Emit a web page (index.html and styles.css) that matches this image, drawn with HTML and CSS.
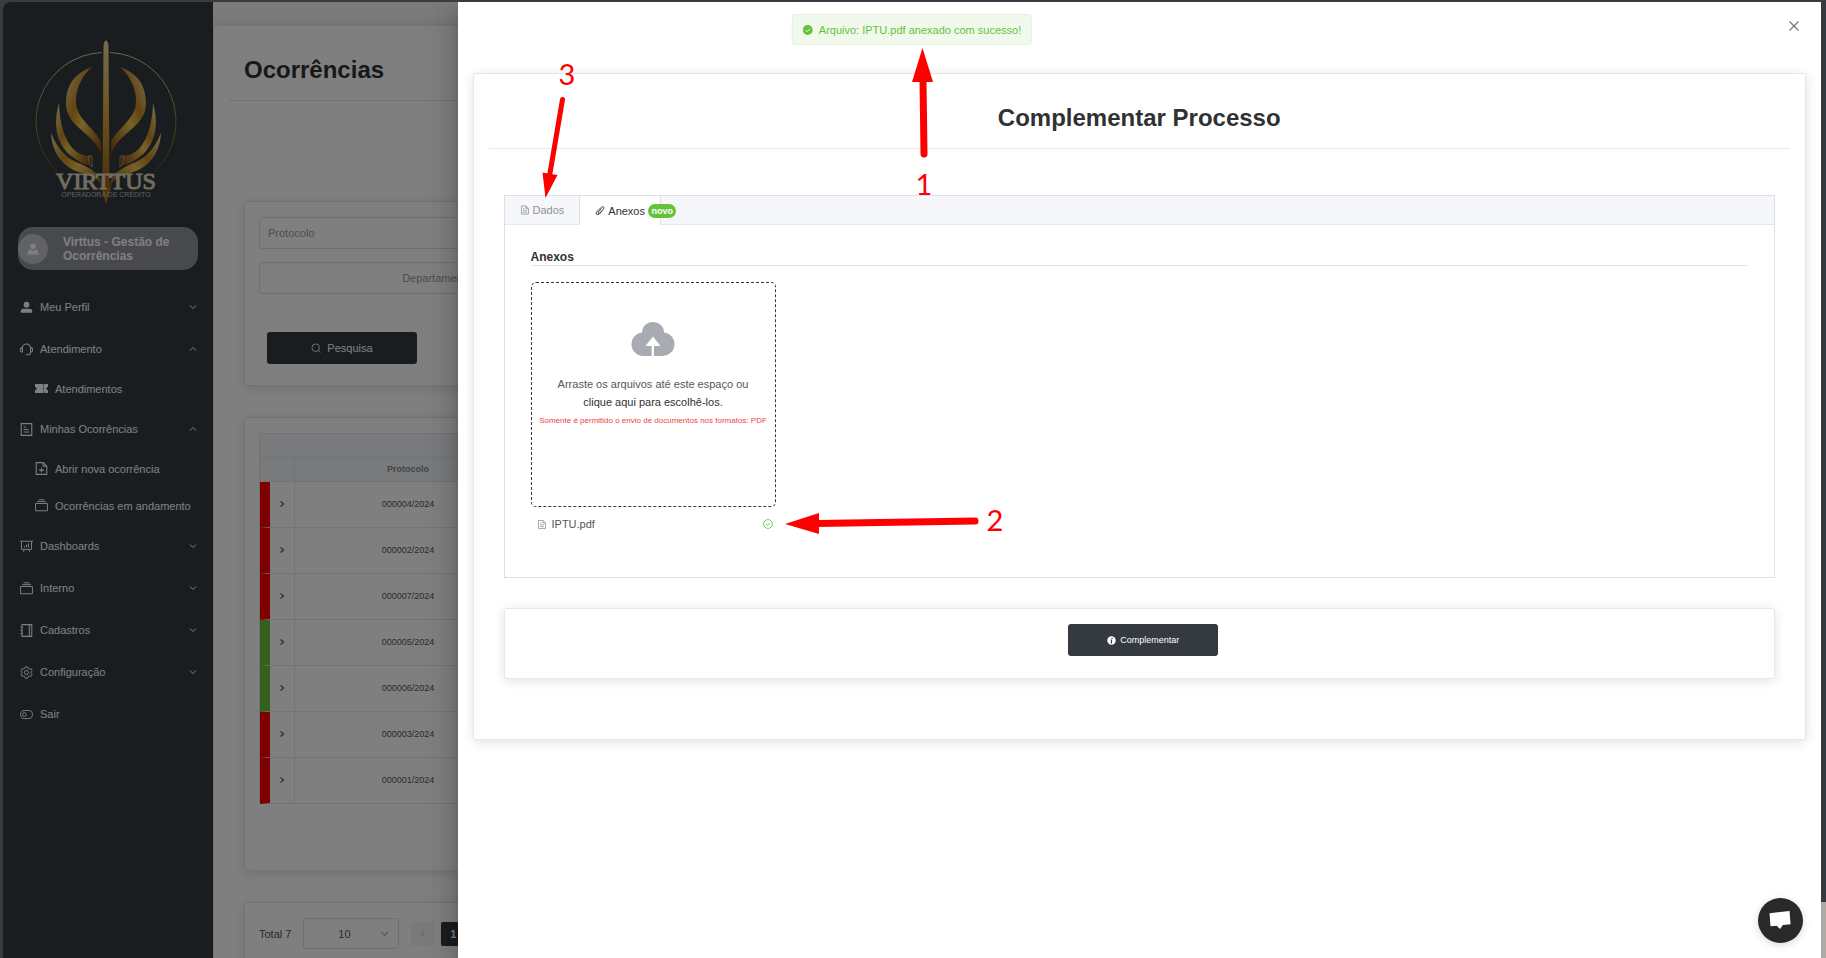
FILE: index.html
```html
<!DOCTYPE html>
<html lang="pt-BR">
<head>
<meta charset="utf-8">
<title>Ocorrências</title>
<link rel="stylesheet" href="styles.css">
</head>
<body>
<svg class="sprite" aria-hidden="true">
  <defs>
    <symbol id="down" viewBox="0 0 16 16"><path d="M3 5.500l5 5 5-5" fill="none" stroke="currentColor" stroke-width="1.600"/></symbol>
    <symbol id="up" viewBox="0 0 16 16"><path d="M3 10.500l5-5 5 5" fill="none" stroke="currentColor" stroke-width="1.600"/></symbol>
    <symbol id="right" viewBox="0 0 16 16"><path d="M5 3l6 5-6 5" fill="none" stroke="currentColor" stroke-width="2.400"/></symbol>
    <symbol id="left" viewBox="0 0 16 16"><path d="M10.500 3l-5 5 5 5" fill="none" stroke="currentColor" stroke-width="1.600"/></symbol>
    <symbol id="user" viewBox="0 0 16 16"><circle cx="8" cy="4.500" r="3.500" fill="currentColor"/><path d="M1 14.500v-2q0-3 3-3h8q3 0 3 3v2z" fill="currentColor"/></symbol>
    <symbol id="doc" viewBox="0 0 16 16"><path d="M2.500 1.500h7l4 4v9h-11zM9.500 1.500v4h4M5 5.500h2M5 8.500h6M5 11.500h6" fill="none" stroke="currentColor" stroke-width="1.300"/></symbol>
    <symbol id="box" viewBox="0 0 16 16"><path d="M.7 5.500h14.600v9H.7zM2.500 3.300h11M4.500 1h7" fill="none" stroke="currentColor" stroke-width="1.200"/></symbol>
  </defs>
</svg>

<div class="frame">
  <div class="window">
    <div class="shell">
      <aside class="sidebar">
        <svg class="logo" viewBox="0 0 150 170" role="img" aria-label="Virttus Operadora de Crédito">
          <defs>
            <linearGradient id="gold" x1="0" y1="0" x2="0" y2="1"><stop offset="0" stop-color="#e8d9a0"/><stop offset=".45" stop-color="#dba93a"/><stop offset="1" stop-color="#8a4f12"/></linearGradient>
            <linearGradient id="gold2" x1="0" y1="0" x2="1" y2="1"><stop offset="0" stop-color="#f0dfa0"/><stop offset=".35" stop-color="#c58a22"/><stop offset=".55" stop-color="#f0c650"/><stop offset="1" stop-color="#7d4410"/></linearGradient>
            <linearGradient id="ring" x1="0" y1="0" x2="0" y2="1"><stop offset="0" stop-color="#e0cf90"/><stop offset="1" stop-color="#7a4a14"/></linearGradient>
          </defs>
          <path d="M71 15.500A69 69 0 0 0 26 134M79 15.500A69 69 0 0 1 124 134" fill="none" stroke="url(#ring)"/>
          <g id="wing">
            <path d="M61 30C44 36 35 48 35 66c0 17 14 25 22 33 8 7 11 12 13 20v-14c-3-7-9-12-14-18-8-9-11-15-11-23 0-12 5-24 16-34z" fill="url(#gold2)"/>
            <path d="M28 66c-6 20-3 40 11 52 6 5 14 10 20 10l1-9c-19 1-31-20-32-53z" fill="url(#gold2)"/>
            <path d="M57 119h4v11q-3-2-3-6z" fill="none" stroke="#c9a45a" stroke-width=".8"/>
            <path d="M20 96c1 20 12 35 31 40 12 3 18 8 22 16-3-15-12-20-23-25-14-5-23-14-30-31z" fill="url(#gold2)"/>
          </g>
          <use href="#wing" transform="matrix(-1 0 0 1 150 0)"/>
          <path d="M72.500 8q0-3 2.500-5 2.500 2 2.500 5l1 140-3.500 18-3.500-18z" fill="url(#gold)"/>
          <path d="M69 147l6 20 6-20-6 8z" fill="#a9721c"/>
          <text x="75" y="152" text-anchor="middle" class="logo-name">VIRTTUS</text>
          <text x="75" y="160" text-anchor="middle" class="logo-sub">OPERADORA DE CRÉDITO</text>
        </svg>
        <div class="profile">
          <span class="avatar"><svg viewBox="0 0 12 12"><circle cx="6" cy="3.200" r="2.700" fill="#fff"/><path d="M.5 11.500q0-5 3.500-5l2 2 2-2q3.500 0 3.500 5z" fill="#fff"/></svg></span>
          <strong>Virttus - Gestão de Ocorrências</strong>
        </div>
        <nav class="menu">
          <a href="#"><svg class="ico"><use href="#user"/></svg>Meu Perfil<svg class="arrow"><use href="#down"/></svg></a>
          <a href="#"><svg class="ico" viewBox="0 0 16 16"><path d="M3 6a5 4.800 0 0 1 10 0M3 6v5H2q-1.500 0-1.500-2.500T2 6zM13 6v5h1q1.500 0 1.500-2.500T14 6zM13 11q0 3.500-4 3.500H7" fill="none" stroke="currentColor" stroke-width="1.300"/></svg>Atendimento<svg class="arrow"><use href="#up"/></svg></a>
          <div class="sub">
            <a href="#"><svg class="ico" viewBox="0 0 16 16"><path fill-rule="evenodd" d="M0 2.500h16V6a2 2 0 0 0 0 4v3.500H0V10a2 2 0 0 0 0-4zM10.200 2.500v2h1v-2zm0 4v3h1v-3zm0 5v2h1v-2z" fill="currentColor"/></svg>Atendimentos</a>
          </div>
          <a href="#"><svg class="ico" viewBox="0 0 16 16"><path d="M1.500.8h13v14.400h-13zM4.500 5h3M4.500 8h6M4.500 11h7" fill="none" stroke="currentColor" stroke-width="1.300"/></svg>Minhas Ocorrências<svg class="arrow"><use href="#up"/></svg></a>
          <div class="sub">
            <a href="#"><svg class="ico" viewBox="0 0 16 16"><path d="M1.500.8h8.500l4.500 4.500v9.900h-13zM10 .8v4.500h4.500M8 7v6M5 10h6" fill="none" stroke="currentColor" stroke-width="1.300"/></svg>Abrir nova ocorrência</a>
            <a href="#"><svg class="ico"><use href="#box"/></svg>Ocorrências em andamento</a>
          </div>
          <a href="#"><svg class="ico" viewBox="0 0 16 16"><path d="M0 1.500h16M1.800 1.500v10h12.400v-10M5.500 9V7.500M8 9V5.500M10.500 9V4M5.500 11.500l-1.500 3M10.500 11.500l1.500 3" fill="none" stroke="currentColor" stroke-width="1.200"/></svg>Dashboards<svg class="arrow"><use href="#down"/></svg></a>
          <a href="#"><svg class="ico"><use href="#box"/></svg>Interno<svg class="arrow"><use href="#down"/></svg></a>
          <a href="#"><svg class="ico" viewBox="0 0 16 16"><path d="M2.500.8h12v14.400h-12zM11.500.8v14.400M.5 4h3M.5 8h3M.5 12h3" fill="none" stroke="currentColor" stroke-width="1.300"/></svg>Cadastros<svg class="arrow"><use href="#down"/></svg></a>
          <a href="#"><svg class="ico" viewBox="0 0 16 16"><circle cx="8" cy="8" r="2.500" fill="none" stroke="currentColor" stroke-width="1.200"/><path d="M6.500 1h3l.5 2 1.500.8 2-.6 1.500 2.600L13.600 7.200v1.600l1.400 1.400-1.500 2.600-2-.6-1.500.8-.5 2h-3l-.5-2-1.500-.8-2 .6L1 10.200l1.400-1.400V7.200L1 5.800l1.500-2.600 2 .6L6 3z" fill="none" stroke="currentColor" stroke-width="1.200"/></svg>Configuração<svg class="arrow"><use href="#down"/></svg></a>
          <a href="#"><svg class="ico" viewBox="0 0 16 16"><rect x=".7" y="3" width="14.600" height="10" rx="5" fill="none" stroke="currentColor" stroke-width="1.200"/><circle cx="5.500" cy="8" r="2.300" fill="none" stroke="currentColor" stroke-width="1.200"/></svg>Sair</a>
        </nav>
      </aside>

      <main class="main">
        <div class="page">
          <h1>Ocorrências</h1>
          <section class="card filters">
            <div class="fields">
              <input class="field" type="text" placeholder="Protocolo" aria-label="Protocolo">
            </div>
            <div class="fields">
              <select class="field centered" aria-label="Departamento"><option>Departamento</option></select>
            </div>
            <button class="btn search" type="button"><svg viewBox="0 0 16 16"><circle cx="7.500" cy="7.500" r="6" fill="none" stroke="currentColor" stroke-width="1.300"/><path d="M12 12l3 3" stroke="currentColor" stroke-width="1.300"/></svg>Pesquisa</button>
          </section>
          <section class="card listing">
            <table>
              <colgroup><col class="c-mark"><col class="c-prot"><col></colgroup>
              <thead>
                <tr><th colspan="3"></th></tr>
                <tr><th></th><th>Protocolo</th><th></th></tr>
              </thead>
              <tbody>
                <tr><td class="red"><svg><use href="#right"/></svg></td><td>000004/2024</td><td></td></tr>
                <tr><td class="red"><svg><use href="#right"/></svg></td><td>000002/2024</td><td></td></tr>
                <tr><td class="red"><svg><use href="#right"/></svg></td><td>000007/2024</td><td></td></tr>
                <tr><td class="green"><svg><use href="#right"/></svg></td><td>000005/2024</td><td></td></tr>
                <tr><td class="green"><svg><use href="#right"/></svg></td><td>000006/2024</td><td></td></tr>
                <tr><td class="red"><svg><use href="#right"/></svg></td><td>000003/2024</td><td></td></tr>
                <tr><td class="red"><svg><use href="#right"/></svg></td><td>000001/2024</td><td></td></tr>
              </tbody>
            </table>
          </section>
          <section class="card pager">
            <span>Total 7</span>
            <span class="size"><select aria-label="Itens por página"><option>10</option></select><svg><use href="#down"/></svg></span>
            <button type="button" class="prev" aria-label="Anterior"><svg><use href="#left"/></svg></button>
            <button type="button" class="current">1</button>
          </section>
        </div>
      </main>
    </div>
    <div class="overlay"></div>

    <section class="drawer" role="dialog" aria-labelledby="drawer-title">
      <header class="drawer-head">
        <button type="button" class="close" aria-label="Fechar"><svg viewBox="0 0 10 10"><path d="M.5.5l9 9M9.500.5l-9 9" stroke="currentColor" stroke-width="1.200"/></svg></button>
      </header>
      <div class="card process">
        <h2 id="drawer-title">Complementar Processo</h2>
        <div class="tabs">
          <div class="tablist" role="tablist">
            <button type="button" role="tab"><svg><use href="#doc"/></svg>Dados</button>
            <button type="button" role="tab" class="active" aria-selected="true"><svg viewBox="0 0 16 16"><path d="M10.500 4L5.500 9.500q-1.200 1.500-.3 2.300t2.300-.4l6-6.400q1.500-2 .3-3.300t-3.300.1L3 8.800q-2 2.500-.5 4.300t4.200-.2L12 7.500" fill="none" stroke="currentColor" stroke-width="1.400"/></svg>Anexos<span class="badge">novo</span></button>
          </div>
          <div class="tabbody">
            <h3>Anexos</h3>
            <div class="upload">
              <button type="button" class="drop">
                <svg class="cloud" viewBox="0 0 44 34"><path d="M11 10.500a11 10.500 0 0 1 22 0A12 11.800 0 0 1 32 34H23V24h6.500L22 14.500 14.500 24H20.600v10H12a12 11.800 0 0 1-1-23.500z" fill="#a8abb2"/></svg>
                <span class="line">Arraste os arquivos até este espaço ou</span>
                <span class="line strong">clique aqui para escolhê-los.</span>
                <span class="hint">Somente é permitido o envio de documentos nos formatos: PDF</span>
              </button>
              <a class="file" href="#"><svg class="doc"><use href="#doc"/></svg>IPTU.pdf<svg class="ok" viewBox="0 0 16 16"><circle cx="8" cy="8" r="7" fill="none" stroke="#67c23a" stroke-width="1.400"/><path d="M4.500 8l2.500 2.500 4.500-4.500" fill="none" stroke="#67c23a" stroke-width="1.500"/></svg></a>
            </div>
          </div>
        </div>
        <div class="card actions">
          <button class="btn" type="button"><svg viewBox="0 0 16 16"><circle cx="8" cy="8" r="7.500" fill="#fff"/><path d="M9 3v2.300M8.500 6.500l-1 6M6.500 7h2M6.500 12.300h2.500" stroke="#343a40" stroke-width="1.900"/></svg>Complementar</button>
        </div>
      </div>
    </section>

    <div class="toast" role="status"><svg viewBox="0 0 16 16"><circle cx="8" cy="8" r="8" fill="#67c23a"/><path d="M4.500 8.200l2.500 2.500 4.500-4.700" fill="none" stroke="#f0f9eb" stroke-width="1.600"/></svg>Arquivo: IPTU.pdf anexado com sucesso!</div>

    <button class="chat" type="button" aria-label="Chat"><svg viewBox="0 0 24 22"><path d="M.5 3.500L21.500 1l1 14-8 .8-3 4-3.500-3.300-6.500.6z" fill="#fff"/></svg></button>
  </div>
  <div class="edge"></div>
</div>

<svg class="notes" width="1100" height="600">
  <g fill="#f00" stroke="#f00" stroke-linecap="round">
    <path d="M923 80L924 154" stroke-width="7"/><path d="M922.500 48l10.500 34h-21z" stroke="none"/>
    <path d="M562.500 99.500L549.500 176" stroke-width="5"/><path d="M545.500 198l-3-25.500 15 2.500z" stroke="none"/>
    <path d="M817 523.500L975 521" stroke-width="7"/><path d="M785 524l34-11v21z" stroke="none"/>
  </g>
  <g class="digits"><text x="924" y="195">1</text><text x="995" y="531">2</text><text x="567" y="85">3</text></g>
</svg>
</body>
</html>
```

FILE: styles.css
```css
* { box-sizing: border-box; }

body {
  margin: 0;
  background: #3b3b3b;
  color: #54565a;
  font-family: "Liberation Sans", Arial, sans-serif;
  font-size: 11px;
  line-height: 14px;
  overflow: hidden;
}

button, input, select { font: inherit; color: inherit; }
button { cursor: pointer; }
a { color: inherit; text-decoration: none; }
h1, h2, h3 { margin: 0; color: #303133; }
.sprite { display: none; }

.frame {
  display: grid;
  grid-template-columns: 1fr 5px;
  height: 100vh;
  padding: 2px 0 0 3px;
}
.edge { background: linear-gradient(#343a40 900px, #b1a9a4 900px); }
.window { position: relative; overflow: hidden; border-top-left-radius: 8px; }
.shell { display: flex; height: 100%; }
.overlay { position: absolute; inset: 0; background: rgba(0, 0, 0, .5); }

/* sidebar */
.sidebar {
  flex: 0 0 210px;
  padding: 35px 15px 0;
  background: #343a40;
  color: #fff;
  border-bottom-left-radius: 8px;
}
.logo { display: block; width: 150px; height: 170px; margin-left: 13px; }
.logo-name { font: 24px "Liberation Serif", serif; fill: #e2dabd; stroke: #e2dabd; stroke-width: 1px; paint-order: stroke; }
.logo-sub { font: 7px "Liberation Sans", sans-serif; fill: #c4bfae; }
.profile {
  display: flex;
  align-items: center;
  gap: 15px;
  height: 43px;
  margin-top: 20px;
  padding-right: 20px;
  border-radius: 15px;
  background: #909399;
}
.profile strong { font-size: 12px; }
.avatar {
  display: grid;
  place-items: center;
  flex: 0 0 30px;
  height: 30px;
  border-radius: 50%;
  background: #c0c4cc;
}
.avatar svg { width: 12px; height: 12px; }
.menu { margin-top: 16px; }
.menu a {
  display: flex;
  align-items: center;
  height: 42px;
  padding-left: 2px;
}
.menu .sub { padding: 0 0 1px 15px; }
.menu .sub a { height: 37px; }
.ico { width: 13px; height: 13px; margin-right: 7px; }
.arrow { width: 10px; height: 10px; margin-left: auto; }

/* main page */
.main { flex: 1; padding-top: 23px; background: #f6f6f6; overflow: hidden; }
.page {
  min-height: 100%;
  padding: 28px 15px 0;
  border: 1px solid #e4e7ed;
  border-radius: 3px;
  background: #fff;
  box-shadow: 0 0 12px rgba(0, 0, 0, .1);
}
h1 {
  margin-bottom: 100px;
  padding: 0 15px 14px;
  border-bottom: 1px solid #e4e4e4;
  font-size: 24px;
  line-height: 32px;
}
.card {
  border: 1px solid #e4e7ed;
  border-radius: 3px;
  background: #fff;
  box-shadow: 0 2px 12px rgba(0, 0, 0, .12);
}
.page .card { margin: 0 15px 31px; padding: 15px 14px; }
.filters { min-height: 185px; }
.fields { display: grid; grid-template-columns: repeat(4, 1fr); gap: 20px; margin-bottom: 13px; }
.field {
  height: 32px;
  padding: 0 8px;
  border: 1px solid #dcdfe6;
  border-radius: 3px;
  background: #fff;
  color: #999ca3;
  appearance: none;
}
.field::placeholder { color: #999ca3; }
.centered { padding-right: 16px; text-align-last: center; }
.btn {
  display: flex;
  align-items: center;
  justify-content: center;
  gap: 6px;
  width: 150px;
  height: 32px;
  border: 0;
  border-radius: 3px;
  background: #343a40;
  color: #fff;
}
.search { margin: 38px 0 0 8px; }
.search svg { width: 10px; height: 10px; }

.listing { min-height: 454px; }
table { width: 100%; table-layout: fixed; border-spacing: 0; border-left: 1px solid #e4e7ed; border-top: 1px solid #e4e7ed; }
.c-mark { width: 35px; }
.c-prot { width: 227px; }
th, td { padding: 0 0 2px; border-right: 1px solid #e4e7ed; border-bottom: 1px solid #e4e7ed; text-align: center; }
th { height: 24px; background: #f2f5f9; color: #85888e; font-size: 9px; }
td { height: 46px; font-size: 9px; }
td svg { display: block; width: 8px; height: 8px; margin: 0 auto; }
.red { border-left: 10px solid #f00; }
.green { border-left: 10px solid #67c23a; }

.pager { display: flex; align-items: center; }
.size { position: relative; margin: 0 12px; }
.size select {
  width: 96px;
  height: 31px;
  padding: 0 14px 0 0;
  border: 1px solid #dcdfe6;
  border-radius: 3px;
  background: #fff;
  text-align-last: center;
  appearance: none;
}
.size svg { position: absolute; right: 9px; top: 10px; width: 11px; height: 11px; color: #a8abb2; }
.pager button { display: grid; place-items: center; width: 24px; height: 24px; margin-right: 6px; padding: 0; border: 0; border-radius: 2px; }
.prev { background: #f4f4f5; color: #a8abb2; }
.prev svg { width: 10px; height: 10px; }
.current { background: #343a40; color: #fff; font-weight: 700; }

/* drawer */
.drawer {
  position: absolute;
  top: 0;
  right: 0;
  bottom: 0;
  width: 75%;
  padding: 15px;
  background: #fff;
  box-shadow: 0 8px 10px -5px rgba(0, 0, 0, .2), 0 16px 24px 2px rgba(0, 0, 0, .14), 0 6px 30px 5px rgba(0, 0, 0, .12);
}
.drawer-head { display: flex; justify-content: flex-end; height: 56px; padding: 4px 7px 0 0; }
.close { width: 10px; height: 10px; padding: 0; border: 0; background: none; color: #72767b; }
.close svg { display: block; width: 10px; height: 10px; }
.process { padding: 28px 15px 60px; }
h2 {
  padding-bottom: 14px;
  border-bottom: 1px solid #e8e8e8;
  font-size: 24px;
  line-height: 32px;
  text-align: center;
}
.tabs { margin: 46px 15px 30px; border: 1px solid #dcdfe6; }
.tablist { display: flex; height: 29px; background: #f5f7fa; border-bottom: 1px solid #e4e7ed; }
.tablist button {
  position: relative;
  display: flex;
  align-items: center;
  gap: 3px;
  height: 28px;
  padding: 0 15px;
  border: 0;
  border-right: 1px solid #dcdfe6;
  background: none;
  color: #909399;
}
.tablist .active { height: 29px; background: #fff; color: #303133; }
.tablist svg { width: 10px; height: 10px; }
.badge {
  position: absolute;
  left: 68px;
  top: 8px;
  width: 28px;
  border-radius: 7px;
  background: #67c23a;
  color: #fff;
  font-size: 9px;
  font-weight: 700;
  line-height: 14px;
  text-align: center;
}
.tabbody { padding: 25px 26px 41px; }
h3 { border-bottom: 1px solid #e4e4e8; font-size: 12px; line-height: 15px; }
.upload { width: 245px; margin-top: 16px; }
.drop {
  display: flex;
  flex-direction: column;
  align-items: center;
  width: 100%;
  height: 225px;
  padding: 39px 0 0;
  border: 1px dashed #343a40;
  border-radius: 5px;
  background: #fff;
}
.cloud { width: 44px; height: 34px; margin-bottom: 19px; }
.line { line-height: 18px; white-space: nowrap; }
.strong { color: #303133; }
.hint { margin-top: 3px; color: #f03e3e; font-size: 8px; line-height: 14px; white-space: nowrap; }
.file { display: flex; align-items: center; height: 24px; margin-top: 5px; padding: 0 3px 0 6px; }
.doc { width: 10px; height: 11px; margin-right: 5px; color: #909399; }
.ok { width: 10px; height: 10px; margin-left: auto; }
.actions { display: flex; justify-content: center; margin: 0 15px; padding: 15px 0 22px 8px; }
.actions .btn { gap: 4px; font-size: 9px; }
.actions svg { width: 9px; height: 9px; }

.toast {
  position: absolute;
  left: 50%;
  top: 12px;
  display: flex;
  align-items: center;
  gap: 6px;
  height: 31px;
  padding: 0 10px;
  border: 1px solid #e1f3d8;
  border-radius: 3px;
  background: #f0f9eb;
  color: #67c23a;
  white-space: nowrap;
  transform: translateX(-50%);
}
.toast svg { width: 10px; height: 10px; }

.chat {
  position: absolute;
  right: 18px;
  bottom: 15px;
  display: grid;
  place-items: center;
  width: 45px;
  height: 45px;
  padding: 0;
  border: 0;
  border-radius: 50%;
  background: #292929;
  box-shadow: 0 2px 8px rgba(0, 0, 0, .15);
}
.chat svg { width: 23px; height: 21px; }

.notes { position: absolute; left: 0; top: 0; pointer-events: none; }
.digits { font: 29px Lato, "Open Sans", sans-serif; fill: #f00; text-anchor: middle; }
```
